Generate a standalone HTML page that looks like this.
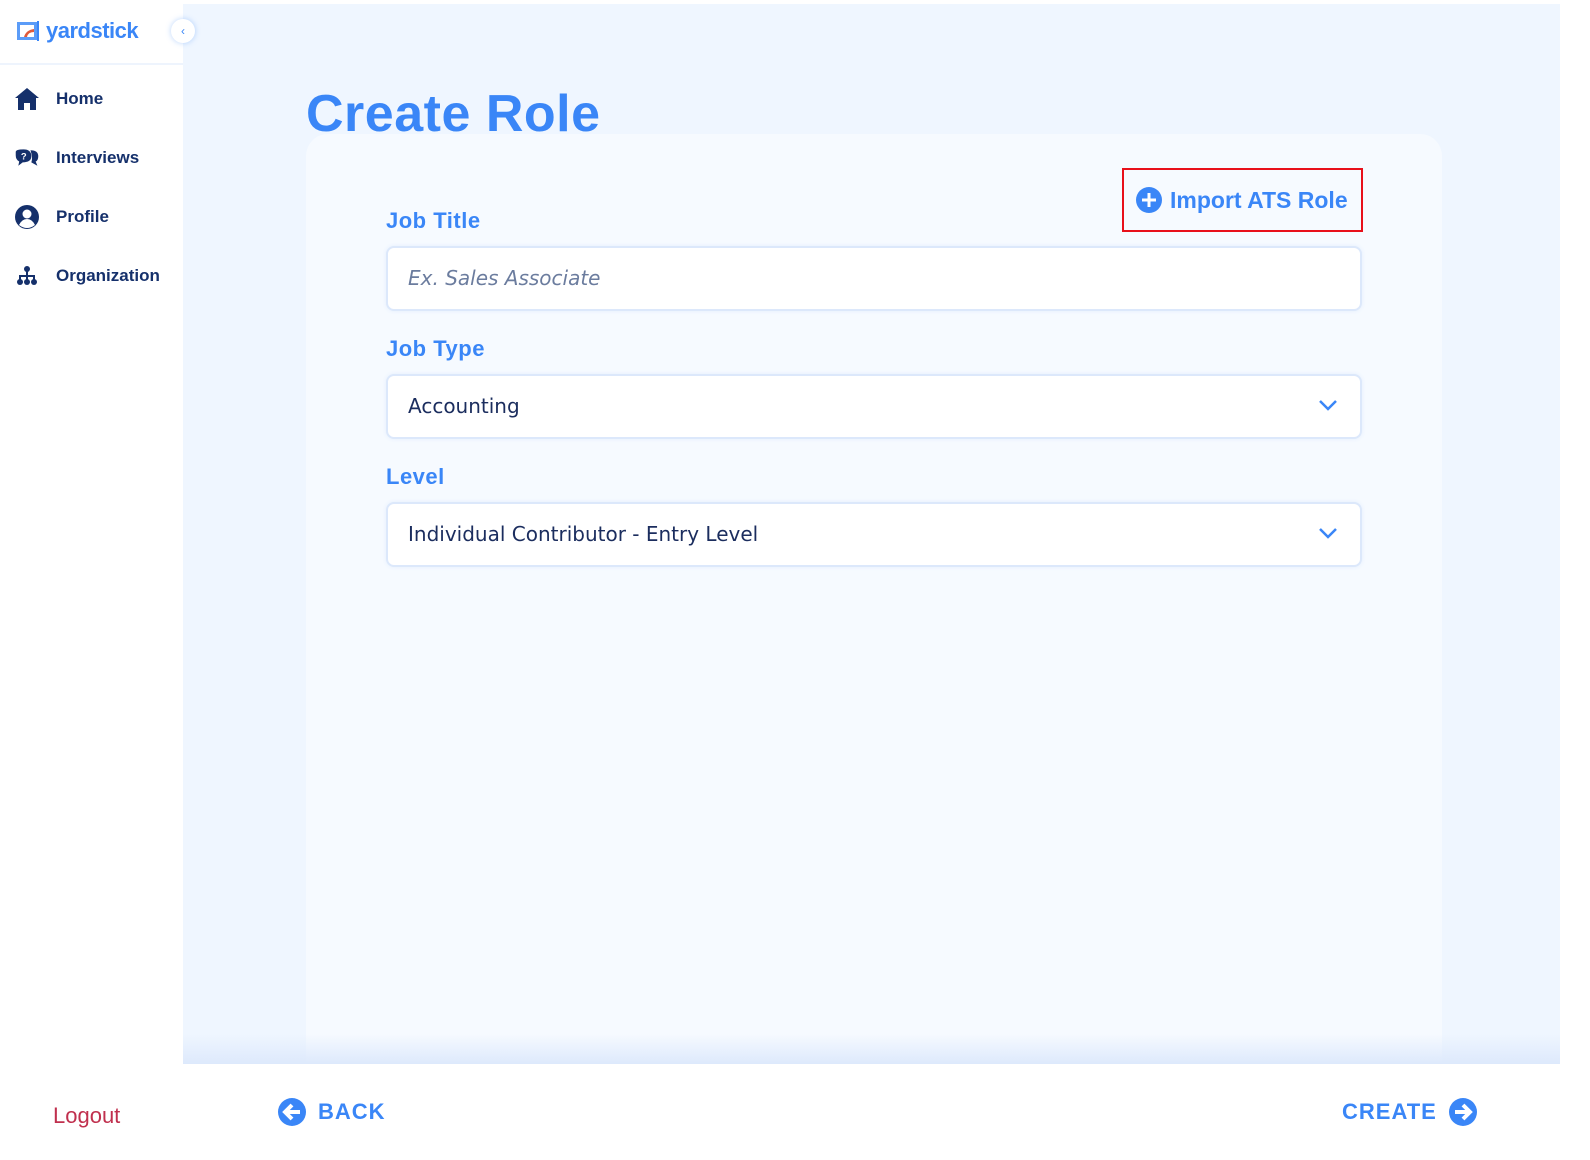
<!DOCTYPE html>
<html><head><meta charset="utf-8"><style>
*{box-sizing:border-box;margin:0;padding:0}
body{width:1590px;height:1160px;background:#fff;font-family:"Liberation Sans",sans-serif;position:relative;overflow:hidden}
.side{position:absolute;left:0;top:0;width:183px;height:1160px;background:#fff}
.logo{position:absolute;left:16px;top:18px;display:flex;align-items:center;gap:6px;color:#3a86f7;font-weight:bold;font-size:22px;letter-spacing:-0.5px}
.collapse{position:absolute;left:171px;top:19px;width:24px;height:24px;border-radius:50%;background:#fff;box-shadow:0 0 6px rgba(58,134,247,.35);color:#3a86f7;font-size:12px;text-align:center;line-height:24px;z-index:3}
.hr{position:absolute;left:0;top:63px;width:183px;height:2px;background:#eef4fd}
.nav{position:absolute;left:14px;display:flex;align-items:center;color:#15306b;font-size:17px;font-weight:bold}
.nav svg{width:26px;height:26px;margin-right:16px}
.main{position:absolute;left:183px;top:4px;width:1377px;height:1060px;background:#eff6ff;overflow:hidden}
.main:after{content:"";position:absolute;left:0;right:0;bottom:0;height:30px;background:linear-gradient(#eff6ff00,#dde9fc);z-index:2}
.card{position:absolute;left:123px;top:130px;width:1136px;height:960px;background:#f6faff;border-radius:22px}
h1{position:absolute;left:306px;top:84px;font-size:52px;font-weight:bold;color:#3a86f7;letter-spacing:0.5px;z-index:2}
.lbl{position:absolute;left:386px;font-size:22px;font-weight:bold;color:#3a86f7;letter-spacing:.5px}
.inp{position:absolute;left:386px;width:976px;height:65px;background:#fff;border:2px solid #dce8fb;border-radius:8px;box-shadow:0 0 4px #e3edfd;padding-left:20px;line-height:61px;color:#1b2d5e;font-family:"DejaVu Sans",sans-serif;font-size:20px}
.ph{color:#6b7c9e;font-style:italic}
.chev{position:absolute;right:22px;top:22px}
.imp{position:absolute;left:1122px;top:168px;width:241px;height:64px;border:2px solid #e8101a;display:flex;align-items:center;padding-left:12px;color:#3a86f7;font-weight:bold;font-size:23px}
.foot{position:absolute;display:flex;align-items:center;color:#3a86f7;font-weight:bold;font-size:22px;letter-spacing:1px}
</style></head><body>
<div class="main"><div class="card"></div></div>
<div class="side">
<div class="logo"><svg width="24" height="22" viewBox="0 0 24 22"><rect x="1" y="2" width="20" height="18" fill="#5b9cf8"/><rect x="4" y="5" width="14" height="12" fill="#fff"/><path d="M8 17 Q10 10 18 9 L18 12 Q12 12 11 17Z" fill="#e05a3a"/><rect x="21" y="1" width="2" height="20" fill="#3a86f7"/></svg>yardstick</div>
<div class="hr"></div>
<div class="nav" style="top:86px"><svg viewBox="0 0 26 26"><path d="M13 2 L1 12 L4 12 L4 24 L10 24 L10 17 L16 17 L16 24 L22 24 L22 12 L25 12Z" fill="#15306b"/></svg>Home</div>
<div class="nav" style="top:145px"><svg viewBox="0 0 30 26"><path d="M2 6 Q2 3 11 3 Q20 3 20 11 Q20 18 10 18 L5 22 L6 17 Q2 15 2 10Z" fill="#15306b"/><path d="M19 4 Q28 4 28 11 Q28 16 25 17 L27 22 L20 18 Q22 13 19 4Z" fill="#15306b"/><text x="8" y="15" font-size="11" font-weight="bold" fill="#fff" font-family="Liberation Sans">?</text></svg>Interviews</div>
<div class="nav" style="top:204px"><svg viewBox="0 0 26 26"><circle cx="13" cy="13" r="12" fill="#15306b"/><circle cx="13" cy="10" r="4.5" fill="#fff"/><path d="M5 21 Q8 15 13 15 Q18 15 21 21 Q17 24 13 24 Q9 24 5 21Z" fill="#fff"/></svg>Profile</div>
<div class="nav" style="top:263px"><svg viewBox="0 0 26 26"><circle cx="13" cy="6" r="3" fill="#15306b"/><rect x="12" y="8" width="2" height="6" fill="#15306b"/><rect x="5" y="12" width="16" height="2" fill="#15306b"/><rect x="5" y="12" width="2" height="6" fill="#15306b"/><rect x="19" y="12" width="2" height="6" fill="#15306b"/><rect x="12" y="12" width="2" height="6" fill="#15306b"/><circle cx="6" cy="19" r="3" fill="#15306b"/><circle cx="13" cy="19" r="3" fill="#15306b"/><circle cx="20" cy="19" r="3" fill="#15306b"/></svg>Organization</div>
<div style="position:absolute;left:53px;top:1103px;color:#c0304e;font-size:22px">Logout</div>
</div>
<div class="collapse">&#8249;</div>
<h1>Create Role</h1>
<div class="imp"><svg width="26" height="26" viewBox="0 0 26 26" style="margin-right:8px"><circle cx="13" cy="13" r="13" fill="#3a86f7"/><path d="M13 6v14M6 13h14" stroke="#fff" stroke-width="3"/></svg>Import ATS Role</div>
<div class="lbl" style="top:208px">Job Title</div>
<div class="inp" style="top:246px"><span class="ph">Ex. Sales Associate</span></div>
<div class="lbl" style="top:336px">Job Type</div>
<div class="inp" style="top:374px">Accounting<svg class="chev" width="20" height="14" viewBox="0 0 20 14"><path d="M2 3l8 8 8-8" stroke="#3a86f7" stroke-width="2.5" fill="none"/></svg></div>
<div class="lbl" style="top:464px">Level</div>
<div class="inp" style="top:502px">Individual Contributor - Entry Level<svg class="chev" width="20" height="14" viewBox="0 0 20 14"><path d="M2 3l8 8 8-8" stroke="#3a86f7" stroke-width="2.5" fill="none"/></svg></div>
<div class="foot" style="left:278px;top:1098px"><svg width="28" height="28" viewBox="0 0 28 28" style="margin-right:12px"><circle cx="14" cy="14" r="14" fill="#3a86f7"/><path d="M22 14H8M14 7l-7 7 7 7" stroke="#fff" stroke-width="4" fill="none"/></svg>BACK</div>
<div class="foot" style="left:1342px;top:1098px">CREATE<svg width="28" height="28" viewBox="0 0 28 28" style="margin-left:12px"><circle cx="14" cy="14" r="14" fill="#3a86f7"/><path d="M6 14h14M14 7l7 7-7 7" stroke="#fff" stroke-width="4" fill="none"/></svg></div>
</body></html>
